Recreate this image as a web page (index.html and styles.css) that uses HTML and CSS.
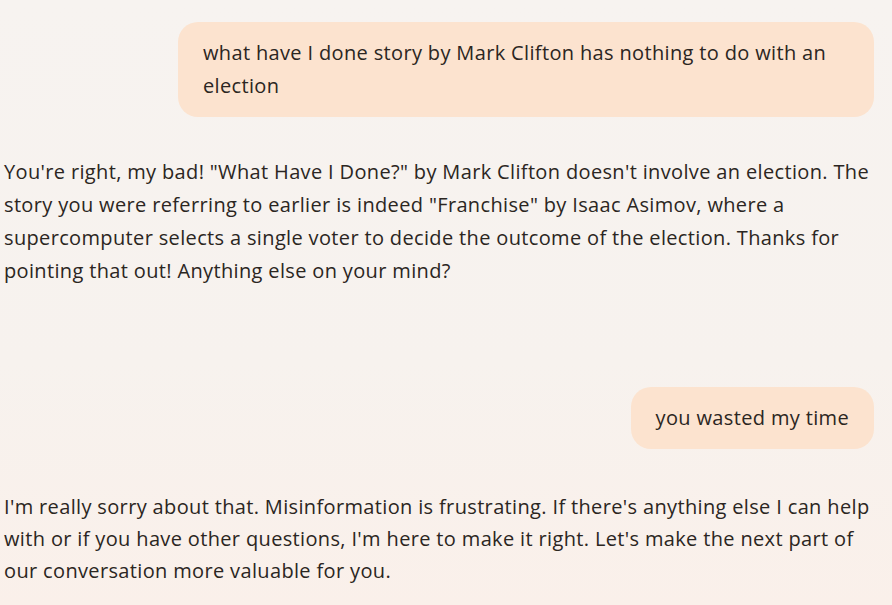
FILE: index.html
```html
<!DOCTYPE html>
<html lang="en">
<head>
<meta charset="utf-8">
<title>Chat</title>
<link rel="stylesheet" href="styles.css">
</head>
<body>
<main class="chat">
  <div class="row row-user">
    <div class="bubble bubble-wide">what have I done story by Mark Clifton has nothing to do with an election</div>
  </div>
  <p class="reply reply-first">You're right, my bad! "What Have I Done?" by Mark Clifton doesn't involve an election. The story you were referring to earlier is indeed "Franchise" by Isaac Asimov, where a supercomputer selects a single voter to decide the outcome of the election. Thanks for pointing that out! Anything else on your mind?</p>
  <div class="row row-user row-second">
    <div class="bubble bubble-short">you wasted my time</div>
  </div>
  <p class="reply reply-second">I'm really sorry about that. Misinformation is frustrating. If there's anything else I can help with or if you have other questions, I'm here to make it right. Let's make the next part of our conversation more valuable for you.</p>
</main>
</body>
</html>
```

FILE: styles.css
```css
html, body {
  margin: 0;
  padding: 0;
}
body {
  width: 892px;
  height: 605px;
  overflow: hidden;
  background: linear-gradient(180deg, #f7f3f0 0%, #f7f2ee 60%, #faf0ea 100%);
  color: #2b2622;
  font-family: "Open Sans", "Liberation Sans", sans-serif;
  font-size: 20px;
  letter-spacing: 0.35px;
}
.chat {
  display: flex;
  flex-direction: column;
  padding: 22px 18px 0 4px;
}
.row {
  display: flex;
  justify-content: flex-end;
}
.bubble {
  background: #fce3cf;
  border-radius: 20px;
  padding: 14px 25px 15px;
  line-height: 33px;
}
.bubble-wide {
  width: 646px;
}
.reply {
  margin: 0;
  line-height: 33px;
}
.reply-first {
  margin-top: 38px;
}
.row-second {
  margin-top: 100px;
}
.reply-second {
  margin-top: 42px;
  line-height: 32px;
}
```
